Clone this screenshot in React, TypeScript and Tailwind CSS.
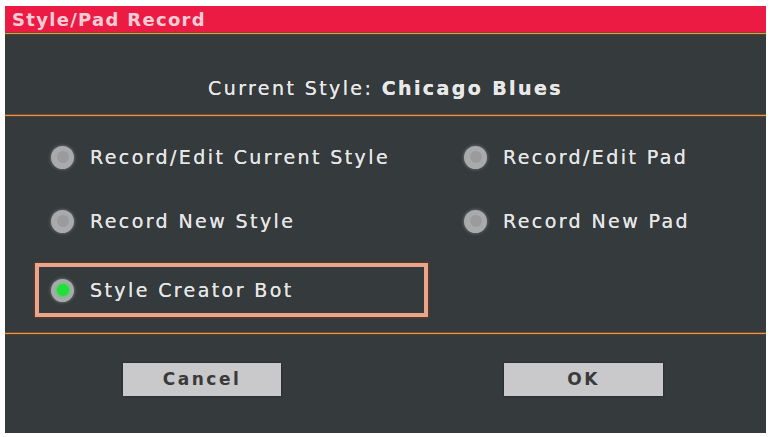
import React from 'react';

const font = { fontFamily: '"DejaVu Sans", "Liberation Sans", sans-serif' };

function Radio({ on }: { on?: boolean }) {
    return (
        <span className="relative flex h-[23px] w-[23px] shrink-0 items-center justify-center rounded-full bg-[#a9aaac] shadow-[0_0_3px_1px_rgba(150,150,150,0.45)]">
            <span className={`h-[12px] w-[12px] rounded-full ${on ? 'bg-[#1fe03a] shadow-[0_0_3px_1px_rgba(40,230,60,0.7)]' : 'bg-[#9a9b9d]'}`} />
        </span>
    );
}

function Option({ label, on }: { label: string; on?: boolean }) {
    return (
        <div className="flex h-[40px] items-center gap-[16px]">
            <Radio on={on} />
            <span className="text-[19px] tracking-[2.4px] text-[#e6e6e6] [text-shadow:0_0_0.5px_#e6e6e6]">{label}</span>
        </div>
    );
}

function Separator() {
    return (
        <div className="flex h-[3px] flex-col">
            <div className="h-px bg-[#7a4a22]" />
            <div className="h-px bg-[#dc9862]" />
            <div className="h-px bg-[#5e3c1e]" />
        </div>
    );
}

export default function App() {
    return (
        <div className="h-[437px] w-[770px] bg-white pb-[4px] pl-[5px] pr-[4px] pt-[6px]" style={font}>
            <div className="flex h-full flex-col bg-[#353a3d]">
                {/* title bar */}
                <div className="flex h-[26px] items-center bg-[#ec1b43] pl-[7px]">
                    <span className="text-[18px] font-bold tracking-[1.3px] text-[#f6cdd6]">Style/Pad Record</span>
                </div>
                <Separator />

                <div className="flex h-[79px] items-end justify-center pb-[12px] text-[19px] tracking-[2.4px] text-[#e8e8e8] [text-shadow:0_0_0.5px_#e8e8e8]">
                    <span>Current Style: <b>Chicago Blues</b></span>
                </div>
                <Separator />

                <div className="flex h-[215px] flex-col pt-[20px]">
                    <div className="grid grid-cols-[413px_1fr] pl-[46px]">
                        <Option label="Record/Edit Current Style" />
                        <Option label="Record/Edit Pad" />
                    </div>
                    <div className="mt-[24px] grid grid-cols-[413px_1fr] pl-[46px]">
                        <Option label="Record New Style" />
                        <Option label="Record New Pad" />
                    </div>
                    <div className="ml-[30px] mt-[22px] flex h-[54px] w-[393px] items-center border-[4px] border-[#eba58a] pl-[12px] shadow-[0_0_2px_1px_rgba(120,60,30,0.6)]">
                        <Option label="Style Creator Bot" on />
                    </div>
                </div>
                <Separator />

                <div className="flex flex-1 pt-[28px]">
                    <button className="ml-[118px] h-[33px] w-[158px] bg-[#c9c9cc] text-[17px] font-bold tracking-[2.5px] text-[#3a3a3a] shadow-[0_0_2px_rgba(0,0,0,0.5)]">Cancel</button>
                    <button className="ml-[223px] h-[33px] w-[159px] bg-[#c9c9cc] text-[17px] font-bold tracking-[2.5px] text-[#3a3a3a] shadow-[0_0_2px_rgba(0,0,0,0.5)]">OK</button>
                </div>
            </div>
        </div>
    );
}
